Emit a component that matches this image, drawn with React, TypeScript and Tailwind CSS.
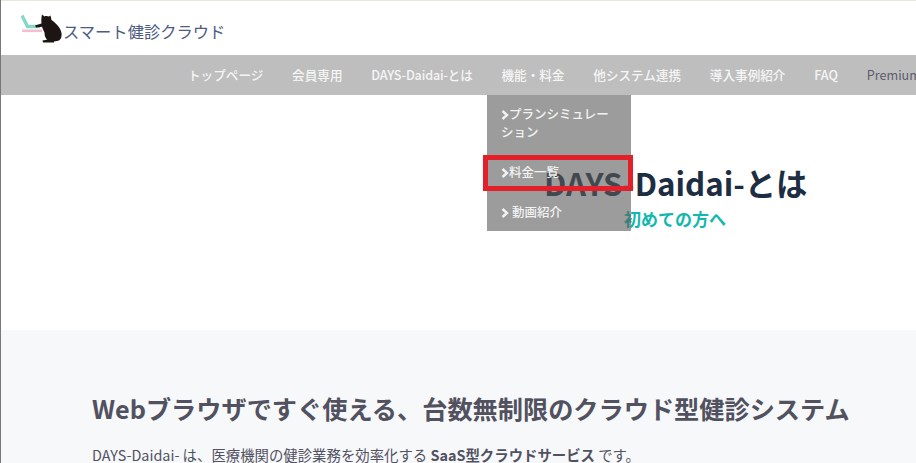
const font = { fontFamily: '"Noto Sans CJK JP", "Noto Sans", sans-serif' }

function LogoMark() {
  return (
    <svg width="42" height="30" viewBox="0 0 42 30" className="shrink-0">
      <path d="M1 1.5 L6.5 12.5 L19 12.5" fill="none" stroke="#86d8c6" strokeWidth="3.4" />
      <rect x="1" y="15.5" width="20" height="2.6" fill="#f3bfd2" />
      <path
        d="M21 0.5 L23.5 2.5 C25 1.8 26.5 2 28 2.6 L29.5 1.5 L30.5 6 C34 8.5 39.5 13 40.5 19 C41 23.5 39.5 26.5 36 27 L33 27.5 L33 28.5 L22 28.5 L21.5 26.5 L26 25.8 C24 23.5 23.5 21 23.5 18.5 C22.5 16.5 21.5 14.5 21 12.8 L15 13.5 L14 11.5 L20.5 9.5 C20.2 6.5 20.3 3.5 21 0.5 Z"
        fill="#1d1414"
      />
    </svg>
  )
}

function Chevron() {
  return (
    <svg width="8" height="10" viewBox="0 0 8 10" className="mb-[2px] inline-block">
      <path d="M1.5 1 L6 5 L1.5 9" fill="none" stroke="currentColor" strokeWidth="2.4" />
    </svg>
  )
}

function Dropdown() {
  return (
    <div className="absolute left-[486px] top-[95px] z-10 h-[136px] w-[144px] bg-[rgba(90,90,90,0.6)] text-[12.5px] font-medium leading-[18px] text-[#f2f2f2]">
      <div className="px-[14px] pt-[10px]"><Chevron />プランシミュレーション</div>
      <div className="px-[14px] pt-[22px]"><Chevron />料金一覧</div>
      <div className="px-[14px] pt-[22px]"><Chevron /><span className="ml-[3px]">動画紹介</span></div>
    </div>
  )
}

export default function App() {
  return (
    <div className="relative h-[463px] w-[916px] overflow-hidden border-l border-[#777] bg-white" style={font}>
      {/* header */}
      <header className="flex h-[55px] items-start border-t border-[#e6e6da] pl-[20px] pt-[13px]">
        <LogoMark />
        <span className="mt-[5px] text-[16.3px] leading-[24px] text-[#4d5c84]">スマート健診クラウド</span>
      </header>

      {/* nav */}
      <nav className="flex h-[40px] items-center gap-[28.8px] bg-[#bebebe] pl-[187px] text-[12.6px] font-medium whitespace-nowrap text-[#f5f5f5]">
        <span>トップページ</span>
        <span>会員専用</span>
        <span className="tracking-[-0.15px]">DAYS-Daidai-とは</span>
        <span>機能・料金</span>
        <span>他システム連携</span>
        <span>導入事例紹介</span>
        <span>FAQ</span>
        <span className="font-normal text-[#5c5c6c]">Premium</span>
      </nav>

      <Dropdown />
      <div className="absolute left-[482px] top-[155px] z-20 h-[36px] w-[150px] border-[5px] border-[#e3202a]" />

      {/* hero */}
      <section className="flex h-[235px] flex-col pl-[543px] pt-[67px]">
        <h1 className="text-[31.3px] leading-[42px] font-bold whitespace-nowrap text-[#1d2d42]">DAYS-Daidai-とは</h1>
        <p className="ml-[80px] mt-[2px] text-[17px] leading-[26px] font-bold text-[#12b8ad]">初めての方へ</p>
      </section>

      {/* intro */}
      <section className="h-[133px] bg-[#f7f8fa] pl-[91px] pt-[60px] text-[#51515f]">
        <h2 className="text-[25.2px] leading-[36px] font-bold whitespace-nowrap">Webブラウザですぐ使える、台数無制限のクラウド型健診システム</h2>
        <p className="mt-[17px] text-[14.4px] leading-[24px] whitespace-nowrap">
          DAYS-Daidai- は、医療機関の健診業務を効率化する <strong className="font-bold">SaaS型クラウドサービス</strong> です。
        </p>
      </section>
    </div>
  )
}
